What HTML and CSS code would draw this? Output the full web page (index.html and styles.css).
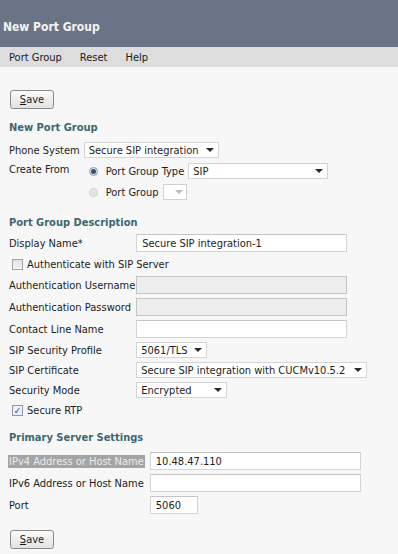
FILE: index.html
```html
<!DOCTYPE html>
<html lang="en">
<head>
  <meta charset="UTF-8">
  <title>New Port Group</title>
  <link rel="stylesheet" href="styles.css">
</head>
<body>
  <div class="titlebar">New Port Group</div>
  <div class="menubar">
    <span>Port Group</span>
    <span>Reset</span>
    <span>Help</span>
  </div>

  <div class="content">
    <button class="btn"><u>S</u>ave</button>

    <div class="group group-new">
      <h2>New Port Group</h2>
      <div class="form">
        <label>Phone System</label>
        <div class="select w-phone"><span>Secure SIP integration</span><i class="arrow"></i></div>

        <label class="top">Create From</label>
        <div class="choices">
          <div class="choice">
            <span class="radio checked"></span>
            <span>Port Group Type</span>
            <div class="select w-type"><span>SIP</span><i class="arrow"></i></div>
          </div>
          <div class="choice">
            <span class="radio"></span>
            <span>Port Group</span>
            <div class="select w-tiny disabled"><span></span><i class="arrow"></i></div>
          </div>
        </div>
      </div>
    </div>

    <div class="group group-desc">
      <h2>Port Group Description</h2>
      <div class="form">
        <label>Display Name*</label>
        <input class="field" type="text" value="Secure SIP integration-1">

        <div class="check-row">
          <span class="checkbox"></span>
          <span>Authenticate with SIP Server</span>
        </div>

        <label>Authentication Username</label>
        <input class="field" type="text" disabled>

        <label>Authentication Password</label>
        <input class="field" type="text" disabled>

        <label>Contact Line Name</label>
        <input class="field" type="text">

        <label>SIP Security Profile</label>
        <div class="select w-profile"><span>5061/TLS</span><i class="arrow"></i></div>

        <label>SIP Certificate</label>
        <div class="select w-cert"><span>Secure SIP integration with CUCMv10.5.2</span><i class="arrow"></i></div>

        <label>Security Mode</label>
        <div class="select w-mode"><span>Encrypted</span><i class="arrow"></i></div>

        <div class="check-row">
          <span class="checkbox checked">&#10003;</span>
          <span>Secure RTP</span>
        </div>
      </div>
    </div>

    <div class="group group-server">
      <h2>Primary Server Settings</h2>
      <div class="form">
        <label><span class="selected">IPv4 Address or Host Name</span></label>
        <input class="field" type="text" value="10.48.47.110">

        <label>IPv6 Address or Host Name</label>
        <input class="field" type="text">

        <label>Port</label>
        <input class="field w-port" type="text" value="5060">
      </div>
    </div>

    <button class="btn btn-bottom"><u>S</u>ave</button>
  </div>
</body>
</html>
```

FILE: styles.css
```css
body {
  margin: 0;
  background: #f7f7f7;
  font-family: "DejaVu Sans Condensed", "DejaVu Sans", sans-serif;
  font-size: 11px;
  color: #1c1c1c;
  height: 554px;
  overflow: hidden;
}

.titlebar {
  height: 47px;
  background: #6a7486;
  color: #f4f4f4;
  font-weight: bold;
  font-size: 12px;
  line-height: 14px;
  padding: 20px 0 0 3px;
  box-sizing: border-box;
}

.menubar {
  height: 20px;
  background: #dddddd;
  display: flex;
  align-items: center;
  gap: 18px;
  padding-left: 9px;
}

.content {
  padding: 23px 9px 0 9px;
}

.btn {
  display: block;
  width: 44px;
  height: 19px;
  margin-left: 1px;
  padding: 0;
  border: 1px solid #8a8a8a;
  border-radius: 3px;
  background: linear-gradient(#fbfbfb, #e2e2e2);
  font-family: inherit;
  font-size: 11px;
  color: #1c1c1c;
}

.btn-bottom {
  margin-top: 16px;
}

h2 {
  margin: 0;
  font-size: 11px;
  line-height: 14px;
  color: #3b6770;
}

.group-new {
  margin-top: 12px;
}
.group-new h2 {
  margin-bottom: 7px;
}
.group-desc {
  margin-top: 16px;
}
.group-desc h2 {
  margin-bottom: 4px;
}
.group-server {
  margin-top: 13px;
}
.group-server h2 {
  margin-bottom: 7px;
}

.form {
  display: grid;
  grid-template-columns: max-content auto;
  column-gap: 4px;
  row-gap: 4px;
  align-items: center;
  justify-items: start;
}
.group-new .form {
  row-gap: 5px;
}
.group-desc .form {
  column-gap: 1px;
}
.group-server .form {
  column-gap: 5px;
}

.form label.top {
  align-self: start;
}

.selected {
  background: #a4a4a4;
  color: #ececec;
  margin-left: -1px;
  padding: 0 1px;
}

.choices {
  display: flex;
  flex-direction: column;
  gap: 5px;
}

.choice {
  display: flex;
  align-items: center;
  height: 16px;
  padding-left: 5px;
}

.radio {
  width: 9px;
  height: 9px;
  border-radius: 50%;
  background: #e4e4e4;
  border: 1px solid #d2d2d2;
  box-sizing: border-box;
  margin-right: 8px;
  position: relative;
}
.radio.checked {
  background: #dbe4ee;
  border-color: #8d9cb0;
}
.radio.checked::after {
  content: "";
  position: absolute;
  left: 1px;
  top: 1px;
  width: 5px;
  height: 5px;
  border-radius: 50%;
  background: #35506e;
}

.choice .select {
  margin-left: 4px;
}

.select {
  height: 16px;
  box-sizing: border-box;
  border: 1px solid #d4d4d4;
  background: #ffffff;
  display: flex;
  align-items: center;
  justify-content: space-between;
  padding: 0 4px 0 4px;
  white-space: nowrap;
}
.select.disabled {
  border-color: #cfcfcf;
}
.select.disabled .arrow {
  border-top-color: #b8b8b8;
}

.arrow {
  width: 0;
  height: 0;
  border-left: 4px solid transparent;
  border-right: 4px solid transparent;
  border-top: 4px solid #2a2a2a;
  margin-left: 6px;
}

.w-phone { width: 135px; }
.w-type { width: 140px; }
.w-tiny { width: 24px; padding: 0 3px 0 0; justify-content: flex-end; }
.w-profile { width: 71px; }
.w-cert { width: 231px; }
.w-mode { width: 91px; }

.field {
  width: 211px;
  height: 18px;
  box-sizing: border-box;
  margin: 0;
  padding: 0 5px;
  border: 1px solid #d4d4d4;
  border-top-color: #c4c4c4;
  background: #ffffff;
  font-family: inherit;
  font-size: 11px;
  color: #1c1c1c;
  outline: none;
}
.field:disabled {
  background: #eeeeee;
  border-color: #c4c4c4;
}
.w-port {
  width: 48px;
}

.check-row {
  grid-column: 1 / -1;
  display: flex;
  align-items: center;
  height: 16px;
  padding-left: 3px;
}

.checkbox {
  width: 11px;
  height: 11px;
  box-sizing: border-box;
  border: 1px solid #a4a4a4;
  background: linear-gradient(#e2e2e2, #f4f4f4);
  margin-right: 4px;
  font-size: 10px;
  line-height: 9px;
  text-align: center;
  color: #3c4ca0;
  font-weight: bold;
}
.checkbox.checked {
  background: #eef0f8;
  border-color: #8e94b4;
}
```
